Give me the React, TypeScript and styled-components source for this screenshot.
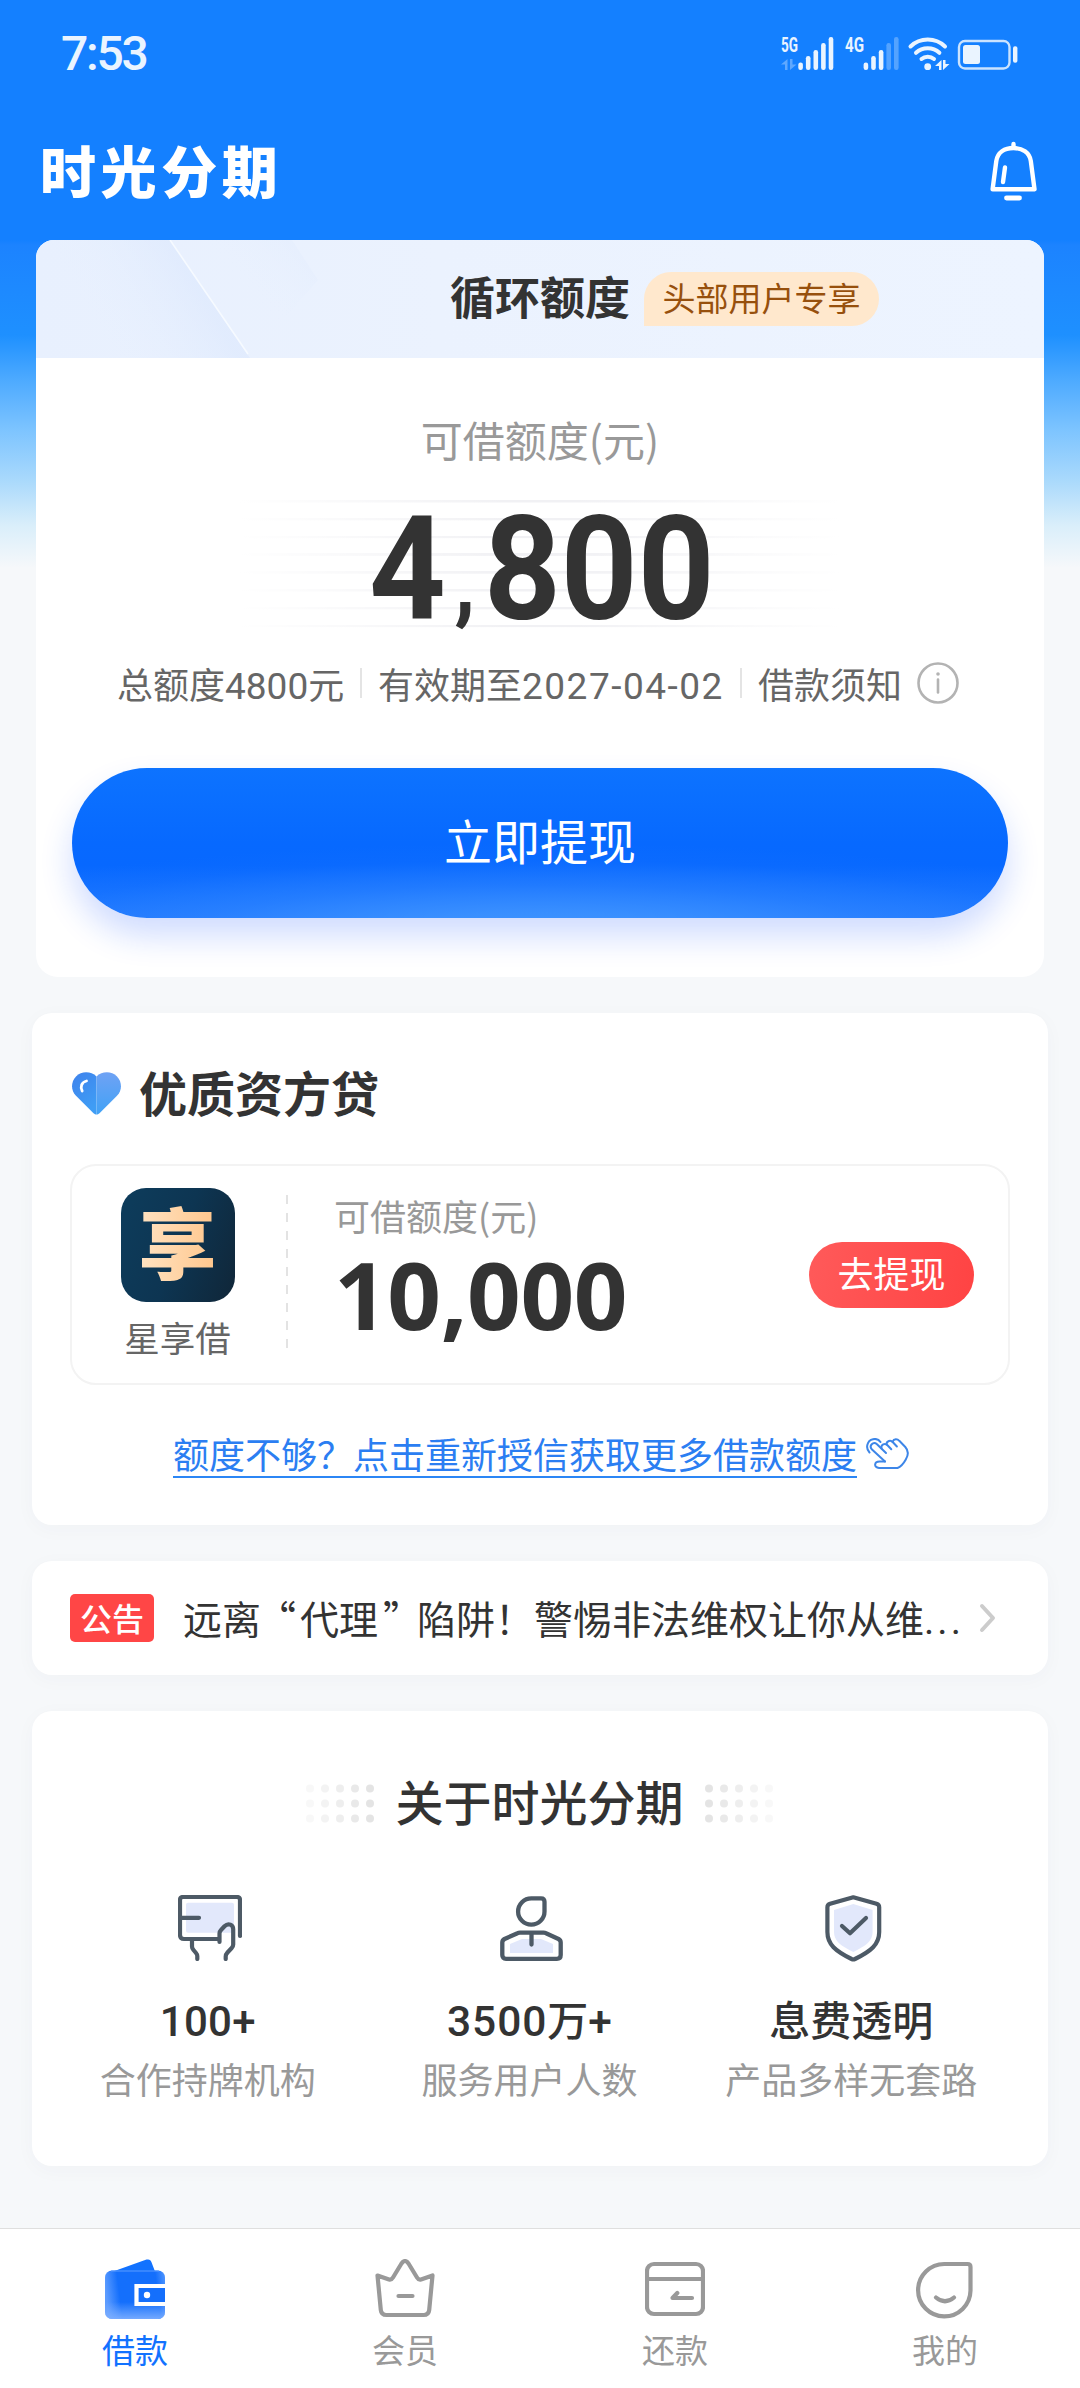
import React from "react";
import styled, { createGlobalStyle } from "styled-components";

const GlobalStyle = createGlobalStyle`
  * { box-sizing: border-box; }
  body { margin: 0; background: #f6f7fa; }
`;

const cjk = `"Noto Sans CJK SC", sans-serif`;

const Page = styled.div`
  width: 1080px;
  height: 2388px;
  display: flex;
  flex-direction: column;
  overflow: hidden;
  font-family: ${cjk};
  color: #333;
  white-space: nowrap;
  background: linear-gradient(
      180deg,
      #1480ff 0,
      #1480ff 240px,
      #1c83ff 245px,
      #1e90ff 335px,
      #4daaff 380px,
      #7dc4ff 430px,
      #a9d9fc 480px,
      #d9eefa 525px,
      #f6f8fa 568px
    )
    #f6f8fa;
`;

const StatusBar = styled.header`
  height: 108px;
  padding: 0 61px 0 61px;
  display: flex;
  align-items: center;
  justify-content: space-between;
`;

const Clock = styled.span`
  font: 500 48px/56px Roboto, sans-serif;
  letter-spacing: -2.2px;
  color: #eaf4ff;
`;

const StatusIcons = styled.div`
  display: flex;
  color: #eaf4ff;
`;

const StatusSvg = styled.svg`
  overflow: visible;
`;

const TitleBar = styled.div`
  height: 132px;
  padding: 0 42px 0 40px;
  display: flex;
  align-items: center;
  justify-content: space-between;
`;

const Brand = styled.h1`
  margin: -11px 0 0;
  font: 900 56px/60px ${cjk};
  letter-spacing: 4.6px;
  color: #fff;
`;

const BellButton = styled.button`
  border: 0;
  padding: 0;
  margin-top: -6px;
  background: none;
  display: flex;
`;

const Main = styled.main`
  flex: 1;
  padding: 0 32px;
  display: flex;
  flex-direction: column;
  gap: 36px;
`;

const Card = styled.section<{ $h: number }>`
  height: ${(p) => p.$h}px;
  flex: none;
  border-radius: 20px;
  background: #fff;
  box-shadow: 0 4px 20px rgba(60, 70, 90, 0.03);
  display: flex;
  flex-direction: column;
`;

const CreditCard = styled(Card)`
  margin: 0 4px;
  border-radius: 18px 18px 22px 22px;
  overflow: hidden;
  align-items: center;
  box-shadow: none;
`;

const CreditHead = styled.div`
  position: relative;
  width: 100%;
  height: 118px;
  padding: 0 0 5px 414px;
  display: flex;
  align-items: center;
  background: linear-gradient(90deg, #e8f0fe, #ebf2fe 40%, #edf4ff);
`;

const HeadShine = styled.svg`
  position: absolute;
  left: 0;
  top: 0;
`;

const CreditName = styled.h2`
  position: relative;
  margin: -2px 0 0;
  font: 700 45px/60px ${cjk};
  color: #333;
`;

const Perk = styled.span`
  position: relative;
  margin: 4px 0 0 14px;
  width: 235px;
  height: 54px;
  border-radius: 27px 27px 27px 0;
  background: #ffe8cd;
  color: #97500d;
  font-size: 33px;
  line-height: 50px;
  text-align: center;
`;

const Caption = styled.div<{ $size: number }>`
  font-size: ${(p) => p.$size}px;
  line-height: 54px;
  color: #999;
`;

const CreditCaption = styled(Caption)`
  margin-top: 54px;
`;

const AmountStage = styled.div`
  width: 600px;
  height: 132px;
  margin-top: 34px;
  display: flex;
  justify-content: center;
  background:
    linear-gradient(90deg, #fff, rgba(255, 255, 255, 0) 45%, rgba(255, 255, 255, 0) 55%, #fff),
    repeating-linear-gradient(180deg, #f1f1f4 0, #f1f1f4 2px, #fff 3px, #fff 17.8px);
`;

const Amount = styled.strong`
  font: 700 144px/132px Roboto, sans-serif;
  transform: scaleX(0.93);
  margin: 4px 0 0 4px;
  color: #333;
`;

const AmountComma = styled.span`
  display: inline-block;
  width: 41px;
  text-align: center;
  font-size: 92px;
  line-height: 1;
  vertical-align: 6px;
`;

const InfoRow = styled.div`
  width: 100%;
  margin-top: 24px;
  padding-left: 81px;
  height: 54px;
  display: flex;
  align-items: center;
  font-size: 36px;
  line-height: 50px;
  color: #666;
`;

const InfoText = styled.span<{ $w: number }>`
  width: ${(p) => p.$w}px;
  margin-top: -1px;
`;

const Num = styled.span<{ $size: number; $gap?: number }>`
  font-family: Roboto, sans-serif;
  font-size: ${(p) => p.$size}px;
  line-height: 0;
  letter-spacing: ${(p) => p.$gap ?? 0}px;
`;

const Divider = styled.i`
  width: 2px;
  height: 30px;
  margin: 0 16px 0 15px;
  background: #e4e4e4;
`;

const InfoMark = styled.svg`
  margin-left: 15px;
`;

const PrimaryButton = styled.button`
  width: 936px;
  height: 150px;
  margin-top: 58px;
  padding: 0 0 8px;
  border: 0;
  border-radius: 75px;
  color: #fff;
  font: 400 48px/70px ${cjk};
  background:
    radial-gradient(
      ellipse 70% 62% at 50% 112%,
      #4095ff 0,
      rgba(64, 149, 255, 0.8) 25%,
      rgba(56, 140, 255, 0.4) 55%,
      rgba(40, 125, 255, 0.1) 82%,
      rgba(40, 125, 255, 0) 100%
    ),
    linear-gradient(180deg, #0d73ff 0, #0769ff 50%, #0768ff 65%, #2079ff 100%);
  box-shadow: 0 18px 32px rgba(20, 80, 255, 0.2);
`;

const PartnerCard = styled(Card)`
  padding: 50px 38px 0;
`;

const SectionTitle = styled.h2`
  margin: 0 0 0 2px;
  height: 60px;
  display: flex;
  align-items: center;
  gap: 18px;
  font: 700 48px/60px ${cjk};
  color: #333;

  span { margin-top: -5px; }
`;

const Offer = styled.div`
  margin-top: 41px;
  height: 221px;
  border: 2px solid #f3f3f3;
  border-radius: 26px;
  display: flex;
`;

const Lender = styled.div`
  width: 141px;
  margin-left: 35px;
  padding-top: 22px;
  display: flex;
  flex-direction: column;
  align-items: center;
  color: #666;
  font-size: 35.5px;
  line-height: 50px;
`;

const LenderLogo = styled.div`
  width: 114px;
  height: 114px;
  border-radius: 25px;
  background: linear-gradient(110deg, #0d3b5a 10%, #0d3552 50%, #102638);
  display: flex;
  justify-content: center;
  margin-bottom: 10px;
`;

const LogoGlyph = styled.span`
  font: 900 78px/105px ${cjk};
  color: transparent;
  background: linear-gradient(90deg, #ffe3c2, #ffc68c);
  background-clip: text;
  -webkit-background-clip: text;
`;

const Dashes = styled.i`
  width: 2px;
  height: 156px;
  margin: 29px 0 0 38px;
  background: repeating-linear-gradient(180deg, #e3e3e3 0, #e3e3e3 9px, #fff 9px, #fff 18px);
`;

const OfferBody = styled.div`
  flex: 1;
  padding: 22px 0 0 46px;
`;

const OfferAmount = styled.strong`
  display: block;
  font: 700 94px/94px "Open Sans", sans-serif;
  letter-spacing: -0.4px;
  color: #333;
  margin: 5px 0 0 0;
`;

const SmallButton = styled.button`
  width: 165px;
  height: 66px;
  margin: 76px 34px 0 0;
  padding: 0 0 6px;
  border: 0;
  border-radius: 33px;
  background: linear-gradient(100deg, #ff5a5a, #ff4343);
  color: #fff;
  font: 400 36px/58px ${cjk};
`;

const MoreLink = styled.a`
  margin: 38px 0 0 103px;
  display: flex;
  align-items: flex-start;
  gap: 9px;
  color: #2b7ef2;
  font-size: 36px;
  line-height: 60px;

  span {
    height: 55px;
    border-bottom: 2px solid #2b86f5;
  }
  svg { margin-top: 15px; }
`;

const NoticeCard = styled(Card)`
  flex-direction: row;
  align-items: center;
  padding: 0 51px 0 38px;
`;

const NoticeTag = styled.span`
  width: 84px;
  height: 48px;
  border-radius: 5px;
  background: #ff4646;
  color: #fff;
  font-size: 32px;
  font-weight: 500;
  line-height: 47px;
  text-align: center;
`;

const NoticeText = styled.span`
  flex: 1;
  margin: -2px 0 0 29px;
  font-size: 39px;
  line-height: 56px;
`;

const Quote = styled.span<{ $shift: number }>`
  margin: 0 ${(p) => -p.$shift}px 0 ${(p) => p.$shift}px;
`;

const AboutCard = styled(Card)`
  padding: 60px 36px 0 15px;
`;

const AboutTitle = styled.h2`
  margin: 0 0 0 20px;
  height: 64px;
  display: flex;
  align-items: center;
  justify-content: center;
  gap: 20px;
  font: 500 48px/58px ${cjk};

  span { margin-top: -6px; }
`;

const Facts = styled.div`
  display: grid;
  grid-template-columns: repeat(3, 1fr);
  margin-top: 52px;
`;

const Fact = styled.div`
  display: flex;
  flex-direction: column;
  align-items: center;
`;

const FactIcon = styled.div`
  height: 82px;
  margin-left: 5px;
  display: flex;
  align-items: center;
`;

const FactValue = styled.div`
  margin-top: 19px;
  font-size: 41px;
  font-weight: 500;
  line-height: 60px;
`;

const FactLabel = styled.div`
  margin-top: 3px;
  font-size: 36px;
  line-height: 54px;
  color: #999;
`;

const TabBar = styled.nav`
  height: 160px;
  flex: none;
  border-top: 1px solid #dfdfdf;
  background: #fff;
  display: grid;
  grid-template-columns: repeat(4, 1fr);
`;

const Tab = styled.a<{ $active?: boolean }>`
  padding-top: 30px;
  display: flex;
  flex-direction: column;
  align-items: center;
  gap: 5px;
  font-size: 33px;
  line-height: 50px;
  color: ${(p) => (p.$active ? "#1272ff" : "#999")};
`;

const Bell = () => (
  <svg width="48" height="60" viewBox="0 0 48 60" fill="none" stroke="#fff" strokeWidth="4.4" strokeLinecap="round" strokeLinejoin="round">
    <path d="M23.5 3v3" />
    <path d="M2.6 48.2 6.3 20C7.6 11.5 14.6 7 23.5 7s16 4.5 17.3 13l3.7 28.2z" />
    <path d="M15 26.5 13 41" />
    <path d="M16.5 57h13" strokeWidth="4.8" />
  </svg>
);

const barTops = [25.5, 19, 13, 6, 0];
const Bars = ({ x, on }: { x: number; on: number }) => (
  <g>
    {barTops.map((t, i) => (
      <rect key={i} x={x + i * 7.6} y={t} width="4.6" height={33 - t} rx="2.2" fill="currentColor" opacity={i < on ? 1 : 0.3} />
    ))}
  </g>
);

const NetLabel = styled.text`
  font: 700 20px Roboto, sans-serif;
`;

const StatusGlyphs = () => (
  <StatusSvg width="238" height="34" viewBox="0 0 238 34" fill="none">
    <g fill="currentColor">
      <NetLabel x="0" y="14.8" textLength="17" lengthAdjust="spacingAndGlyphs">5G</NetLabel>
      <NetLabel x="64" y="14.8" textLength="19" lengthAdjust="spacingAndGlyphs">4G</NetLabel>
      <path d="M6.5 22v11H4v-5.5H0zM9 22h2.500v5.500h4L9 33z" opacity="0.35" />
      <path d="M160.500 23v10h-2.500v-4h-4zM162 23h2.500v4h4L162 33z" />
      <circle cx="146.700" cy="29.700" r="3.400" />
    </g>
    <Bars x={17.3} on={5} />
    <Bars x={82.6} on={3} />
    <g stroke="currentColor" strokeWidth="4" strokeLinecap="round">
      <path d="M129.500 9.500c9.500-9.300 25-9.300 34.500 0" />
      <path d="M135 15.800c6.500-6 17-6 23.400 0" />
      <path d="M140.500 22c3.500-2.900 9-2.900 12.500 0" />
    </g>
    <rect x="178" y="4" width="50.500" height="27.500" rx="6" stroke="currentColor" strokeWidth="2.400" opacity="0.85" />
    <rect x="182" y="8" width="17" height="19" rx="2.500" fill="currentColor" />
    <rect x="232" y="9.300" width="4.400" height="16.400" rx="2" fill="currentColor" />
  </StatusSvg>
);

const Heart = () => (
  <svg width="49" height="43" viewBox="0 0 49 43">
    <defs>
      <linearGradient id="hl" x1="0" y1="0" x2="0.5" y2="1">
        <stop offset="0" stopColor="#3f82ec" />
        <stop offset="1" stopColor="#3f9df5" />
      </linearGradient>
      <linearGradient id="hr" x1="0" y1="0" x2="0" y2="1">
        <stop offset="0" stopColor="#6fa2f4" />
        <stop offset="1" stopColor="#41a2f6" />
      </linearGradient>
    </defs>
    <path d="M24.500 4.500C19-1 9.500-1.200 4 4.500c-5.300 5.500-5.300 14 0 19.300l17.500 17.400c1 .9 2 1.200 3 1.200z" fill="url(#hl)" />
    <path d="M24.500 4.500C30-1 39.500-1.200 45 4.500c5.300 5.500 5.300 14 0 19.300L27.500 41.200c-1 .9-2 1.200-3 1.200z" fill="url(#hr)" />
    <path d="M14.500 9c-5 1-6.500 6-4.300 10" fill="none" stroke="#fff" strokeWidth="2.800" strokeLinecap="round" />
  </svg>
);

const Hand = () => (
  <svg width="43" height="32" viewBox="0 0 43 32" fill="none" stroke="#3d86e8" strokeWidth="2" strokeLinecap="round" strokeLinejoin="round">
    <path d="M3.500 14.500C-.8 10 1 2.500 7 1.200c3.200-.7 6 .5 7.500 2.800" />
    <path d="M19 23.500 6 11.500c-3.500-3.700 1.200-8.500 5-5.300l9 8.800" />
    <path d="M15.500 10.500c-1-3.800 3.500-6 6-3.300l3.800 4" />
    <path d="M20.500 6.500c0-3.800 4.200-4.700 6.400-2.300l4 4.300" />
    <path d="M26.500 3.800c1.500-3.500 5-3 6.800-1l6 6.200c3.200 3.500 3.200 8 .5 12.500-2.200 4-4.800 7.200-8.300 8.500H13c-5.500-.4-5-6.500.5-6.500H19" />
  </svg>
);

const Dots = ({ flip }: { flip?: boolean }) => (
  <svg width="70" height="39" viewBox="0 0 70 39">
    {[0, 1, 2, 3, 4].map((c) =>
      [0, 1, 2].map((r) => (
        <circle key={`${c}${r}`} cx={5 + c * 15} cy={4.5 + r * 15} r="4" fill="#e2e2e2" opacity={0.25 + (flip ? 4 - c : c) * 0.17} />
      ))
    )}
  </svg>
);

const ink = "#4d5a66";
const wash = "#e2e8fb";

const CardInHand = () => (
  <svg width="64" height="66" viewBox="0 0 64 66" fill="none" stroke={ink} strokeWidth="4.200" strokeLinecap="round" strokeLinejoin="round">
    <rect x="8" y="7.700" width="48" height="30" rx="2" fill={wash} stroke="none" />
    <path d="M41 44H6q-4 0-4-4V5q0-3 3-3h54q3 0 3 3v36M2 22.800h19M14 45v6.500q0 2 1.500 3.500l2.500 3q1.300 1.500 1.300 3v3" />
    <path d="M41.500 47V38.500q0-2 1.500-3.500l3.500-3.700c4-4 8.700-1.300 8.700 3V49.500q0 2-1.500 3.500l-4.200 4.500q-1.800 2-1.800 4v2.500" />
  </svg>
);

const Person = () => (
  <svg width="63" height="65" viewBox="0 0 63 65" fill="none" stroke={ink} strokeWidth="4.300" strokeLinecap="round" strokeLinejoin="round">
    <path d="M10 48l12-5h19l12 5v9H10z" fill={wash} stroke="none" />
    <path d="M31.300 2.300H41q3.500 0 3.500 3.500V15.500A13.200 13.200 0 1 1 31.300 2.300z" />
    <path d="M20 36.700h23.500q1.500 0 2.500.5L58.500 43q2.200 1.200 2.200 3.500V59q0 3.800-3.800 3.800H6Q2.300 62.800 2.300 59V46.500Q2.300 44.200 4.500 43L17.500 37.200q1-.5 2.500-.5zM31.500 37v11.500" />
  </svg>
);

const Shield = () => (
  <svg width="57" height="67" viewBox="0 0 57 67" fill="none" stroke={ink} strokeWidth="4.200" strokeLinecap="round" strokeLinejoin="round">
    <path d="M28.300 9 47.600 15v22c0 9-7 14-19.300 20C16 51 9 46 9 37V15z" fill={wash} stroke="none" />
    <path d="M28.300 2.300 51.500 8.800q2.700.8 2.700 3.500V37c0 12.500-8.200 19-24.200 27q-1.700.8-3.400 0C10.600 56 2.400 49.500 2.400 37V12.300q0-2.700 2.700-3.500z" />
    <path d="m17 31 8 7.300L41 23" />
  </svg>
);

const Wallet = () => (
  <svg width="60" height="60" viewBox="0 0 60 60">
    <defs>
      <linearGradient id="wa" x1="0" y1="0.300" x2="1" y2="0.200">
        <stop offset="0" stopColor="#5b9bff" />
        <stop offset="0.220" stopColor="#146ffc" />
        <stop offset="0.850" stopColor="#146ffc" />
        <stop offset="1" stopColor="#4a92ff" />
      </linearGradient>
      <linearGradient id="wb" x1="0" y1="0" x2="0" y2="1">
        <stop offset="0.650" stopColor="#7fb0ff" stopOpacity="0" />
        <stop offset="1" stopColor="#7fb0ff" stopOpacity="0.900" />
      </linearGradient>
    </defs>
    <path d="M8 12.500 41.500.6q4-1 5 2.700L50 12.500z" fill="#1272ff" />
    <rect y="11.500" width="60" height="48.500" rx="7" fill="url(#wa)" />
    <rect y="11.500" width="60" height="48.500" rx="7" fill="url(#wb)" />
    <path d="M6 12h48" stroke="#5b9bff" strokeWidth="1.200" />
    <path d="M60 27H31.500v18H60" fill="#146ffc" stroke="#fff" strokeWidth="4.200" />
    <circle cx="42" cy="36" r="3.200" fill="#fff" />
  </svg>
);

const LineIcon = ({ children }: { children: React.ReactNode }) => (
  <svg width="60" height="60" viewBox="0 0 60 60" fill="none" stroke="#999" strokeWidth="4.200" strokeLinecap="round" strokeLinejoin="round">
    {children}
  </svg>
);

const tabs = [
  { label: "借款", icon: <Wallet />, active: true },
  {
    label: "会员",
    icon: (
      <LineIcon>
        <path d="m2.500 16.500 11.500 4q2.500.6 4-2l8.500-14q3.500-5 7 0l8.500 14q1.500 2.600 4 2l11.500-4-3.300 34.500q-.5 5-5.700 5h-37q-5.200 0-5.700-5zM23.500 37h14" />
      </LineIcon>
    ),
  },
  {
    label: "还款",
    icon: (
      <LineIcon>
        <rect x="2" y="5" width="56" height="50" rx="7" />
        <path d="M2 20h56M47 39H27.500l4.800-5" />
      </LineIcon>
    ),
  },
  {
    label: "我的",
    icon: (
      <LineIcon>
        <path d="M29.500 5H52.500q3 0 3 3v23.500A26.200 26.200 0 1 1 29.500 5zM21 38.500q9 7.500 18 0" />
      </LineIcon>
    ),
  },
];

const facts = [
  { icon: <CardInHand />, value: <Num $size={42} $gap={0.3}>100+</Num>, label: "合作持牌机构" },
  { icon: <Person />, value: <><Num $size={42.5} $gap={0.9}>3500</Num>万<Num $size={42.5}>+</Num></>, label: "服务用户人数" },
  { icon: <Shield />, value: "息费透明", label: "产品多样无套路" },
];

export default function App() {
  return (
    <Page>
      <GlobalStyle />
      <StatusBar>
        <Clock>7:53</Clock>
        <StatusIcons><StatusGlyphs /></StatusIcons>
      </StatusBar>
      <TitleBar>
        <Brand>时光分期</Brand>
        <BellButton aria-label="消息"><Bell /></BellButton>
      </TitleBar>
      <Main>
        <CreditCard $h={737}>
          <CreditHead>
            <HeadShine width="400" height="118" viewBox="0 0 400 118">
              <defs>
                <linearGradient id="sa" gradientUnits="userSpaceOnUse" x1="150" y1="30" x2="60" y2="85">
                  <stop offset="0" stopColor="#dce8fd" />
                  <stop offset="1" stopColor="#e6effe" stopOpacity="0" />
                </linearGradient>
                <linearGradient id="sb" gradientUnits="userSpaceOnUse" x1="275" y1="10" x2="220" y2="62">
                  <stop offset="0" stopColor="#e2ecfd" />
                  <stop offset="1" stopColor="#e9f1fe" stopOpacity="0" />
                </linearGradient>
              </defs>
              <path d="M0 0h134l80 118H0z" fill="url(#sa)" opacity="0.600" />
              <path d="M134 0h122l26 40-68 78z" fill="url(#sb)" opacity="0.500" />
              <path d="m134 0 78 114" stroke="#f6faff" strokeWidth="1.600" />
            </HeadShine>
            <CreditName>循环额度</CreditName>
            <Perk>头部用户专享</Perk>
          </CreditHead>
          <CreditCaption $size={42}>可借额度(元)</CreditCaption>
          <AmountStage><Amount>4<AmountComma>,</AmountComma>800</Amount></AmountStage>
          <InfoRow>
            <InfoText $w={228}>总额度<Num $size={37}>4800</Num>元</InfoText>
            <Divider />
            <InfoText $w={347}>有效期至<Num $size={37} $gap={1.5}>2027-04-02</Num></InfoText>
            <Divider />
            <InfoText $w={144}>借款须知</InfoText>
            <InfoMark width="42" height="42" viewBox="0 0 42 42" fill="none" stroke="#b3b3b3" strokeWidth="2.600" strokeLinecap="round">
              <circle cx="21" cy="21" r="19.500" />
              <path d="M21 17.500v13" />
              <circle cx="21" cy="12" r="1.800" fill="#b3b3b3" stroke="none" />
            </InfoMark>
          </InfoRow>
          <PrimaryButton>立即提现</PrimaryButton>
        </CreditCard>

        <PartnerCard $h={512}>
          <SectionTitle><Heart /><span>优质资方贷</span></SectionTitle>
          <Offer>
            <Lender>
              <LenderLogo><LogoGlyph>享</LogoGlyph></LenderLogo>
              星享借
            </Lender>
            <Dashes />
            <OfferBody>
              <Caption $size={36}>可借额度(元)</Caption>
              <OfferAmount>10,000</OfferAmount>
            </OfferBody>
            <SmallButton>去提现</SmallButton>
          </Offer>
          <MoreLink><span>额度不够？点击重新授信获取更多借款额度</span><Hand /></MoreLink>
        </PartnerCard>

        <NoticeCard $h={114}>
          <NoticeTag>公告</NoticeTag>
          <NoticeText>
            远离<Quote $shift={-4}>“</Quote>代理<Quote $shift={5}>”</Quote>陷阱！警惕非法维权让你从维<Num $size={39} $gap={3}>...</Num>
          </NoticeText>
          <svg width="18" height="30" viewBox="0 0 18 30" fill="none" stroke="#ccc" strokeWidth="4" strokeLinecap="round" strokeLinejoin="round">
            <path d="m3 3 11 12L3 27" />
          </svg>
        </NoticeCard>

        <AboutCard $h={455}>
          <AboutTitle><Dots /><span>关于时光分期</span><Dots flip /></AboutTitle>
          <Facts>
            {facts.map((f) => (
              <Fact key={f.label}>
                <FactIcon>{f.icon}</FactIcon>
                <FactValue>{f.value}</FactValue>
                <FactLabel>{f.label}</FactLabel>
              </Fact>
            ))}
          </Facts>
        </AboutCard>
      </Main>
      <TabBar>
        {tabs.map((t) => (
          <Tab key={t.label} $active={t.active}>
            {t.icon}
            {t.label}
          </Tab>
        ))}
      </TabBar>
    </Page>
  );
}
